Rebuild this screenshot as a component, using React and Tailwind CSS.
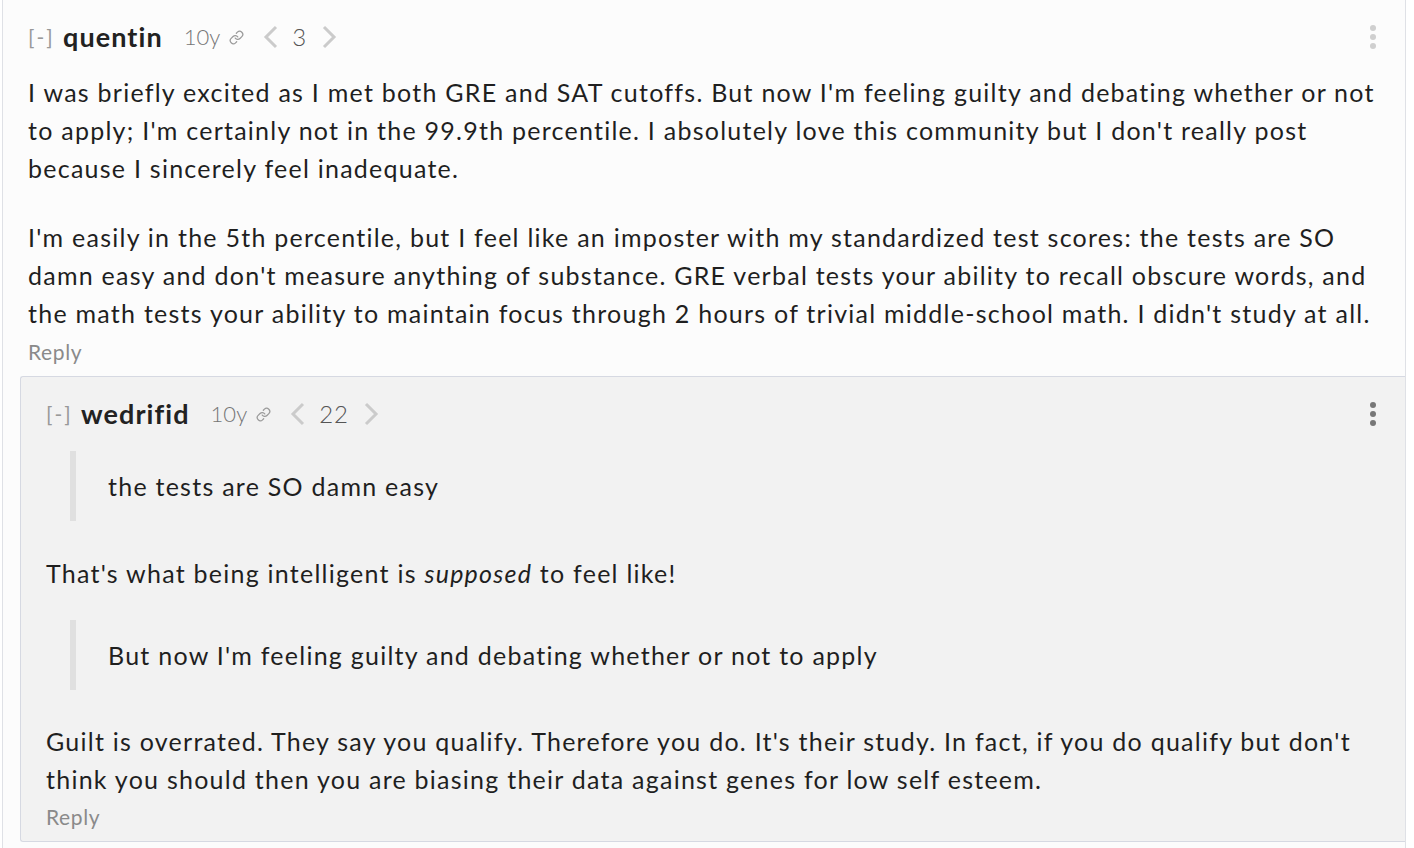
import { Link } from 'lucide-react'

const FONT = { fontFamily: 'Lato, "Noto Sans", sans-serif' }

function Chevron({ dir }) {
  return (
    <svg width="16" height="24" viewBox="0 0 16 24" className="shrink-0">
      <polyline
        points={dir === 'left' ? '13,2 3,12 13,22' : '3,2 13,12 3,22'}
        fill="none"
        stroke="#cbcbcb"
        strokeWidth="3"
      />
    </svg>
  )
}

function Dots({ color }) {
  return (
    <div className="flex flex-col items-center gap-[3px]">
      <span className={`block h-[6px] w-[6px] rounded-full ${color}`} />
      <span className={`block h-[6px] w-[6px] rounded-full ${color}`} />
      <span className={`block h-[6px] w-[6px] rounded-full ${color}`} />
    </div>
  )
}

function Header({ name, score, dots }) {
  return (
    <div className="flex h-[34px] items-center pr-[29px]">
      <span className="w-[25px] text-[21px] tracking-[2px] text-[#999]">[-]</span>
      <span className="ml-[10px] text-[27px] font-bold tracking-[0.04em] text-[#222]">{name}</span>
      <span className="ml-[21px] text-[22px] font-light tracking-normal text-[#757575]">10y</span>
      <Link size={15} strokeWidth={2} className="ml-[9px] text-[#9a9a9a]" />
      <span className="ml-[19px] flex"><Chevron dir="left" /></span>
      <span className="ml-[13px] text-[24px] font-light tracking-[1px] text-[#555]">{score}</span>
      <span className="ml-[14px] flex"><Chevron dir="right" /></span>
      <div className="ml-auto">
        <Dots color={dots} />
      </div>
    </div>
  )
}

function Quote({ children, className }) {
  return (
    <div className={`ml-[24px] border-l-[6px] border-[#e0e0e0] py-[16px] pl-[32px] ${className}`}>
      {children}
    </div>
  )
}

export default function App() {
  return (
    <div className="h-[848px] w-[1414px] overflow-hidden bg-white pl-[2px] text-[25px] leading-[38px] tracking-[0.05em] text-[#1f1f1f]" style={FONT}>
      <div className="h-full w-[1404px] border-x border-[#dfe1e6] bg-[#fcfcfc] pt-[20px]">
        <div className="pl-[25px]">
          <Header name="quentin" score="3" dots="bg-[#cfcfcf]" />
          <div className="mt-[19px] whitespace-nowrap">
            <p>
              I was briefly excited as I met both GRE and SAT cutoffs. But now I'm feeling guilty and debating whether or not<br />
              to apply; I'm certainly not in the 99.9th percentile. I absolutely love this community but I don't really post<br />
              because I sincerely feel inadequate.
            </p>
            <p className="mt-[31px]">
              I'm easily in the 5th percentile, but I feel like an imposter with my standardized test scores: the tests are SO<br />
              damn easy and don't measure anything of substance. GRE verbal tests your ability to recall obscure words, and<br />
              the math tests your ability to maintain focus through 2 hours of trivial middle-school math. I didn't study at all.
            </p>
          </div>
          <div className="mt-[6px] text-[21px] leading-[28px] tracking-[0.03em] text-[#8a8a8a]">Reply</div>
        </div>

        <div className="ml-[17px] mt-[10px] rounded-l-[3px] border border-r-0 border-[#d6d9e2] bg-[#f2f2f2] pb-[10px] pl-[25px] pt-[20px]">
          <Header name="wedrifid" score="22" dots="bg-[#777]" />
          <div className="whitespace-nowrap">
            <Quote className="mt-[20px]">the tests are SO damn easy</Quote>
            <p className="mt-[33px]">
              That's what being intelligent is <em>supposed</em> to feel like!
            </p>
            <Quote className="mt-[28px]">But now I'm feeling guilty and debating whether or not to apply</Quote>
            <p className="mt-[32px]">
              Guilt is overrated. They say you qualify. Therefore you do. It's their study. In fact, if you do qualify but don't<br />
              think you should then you are biasing their data against genes for low self esteem.
            </p>
          </div>
          <div className="mt-[5px] text-[21px] leading-[28px] tracking-[0.03em] text-[#8a8a8a]">Reply</div>
        </div>
      </div>
    </div>
  )
}
